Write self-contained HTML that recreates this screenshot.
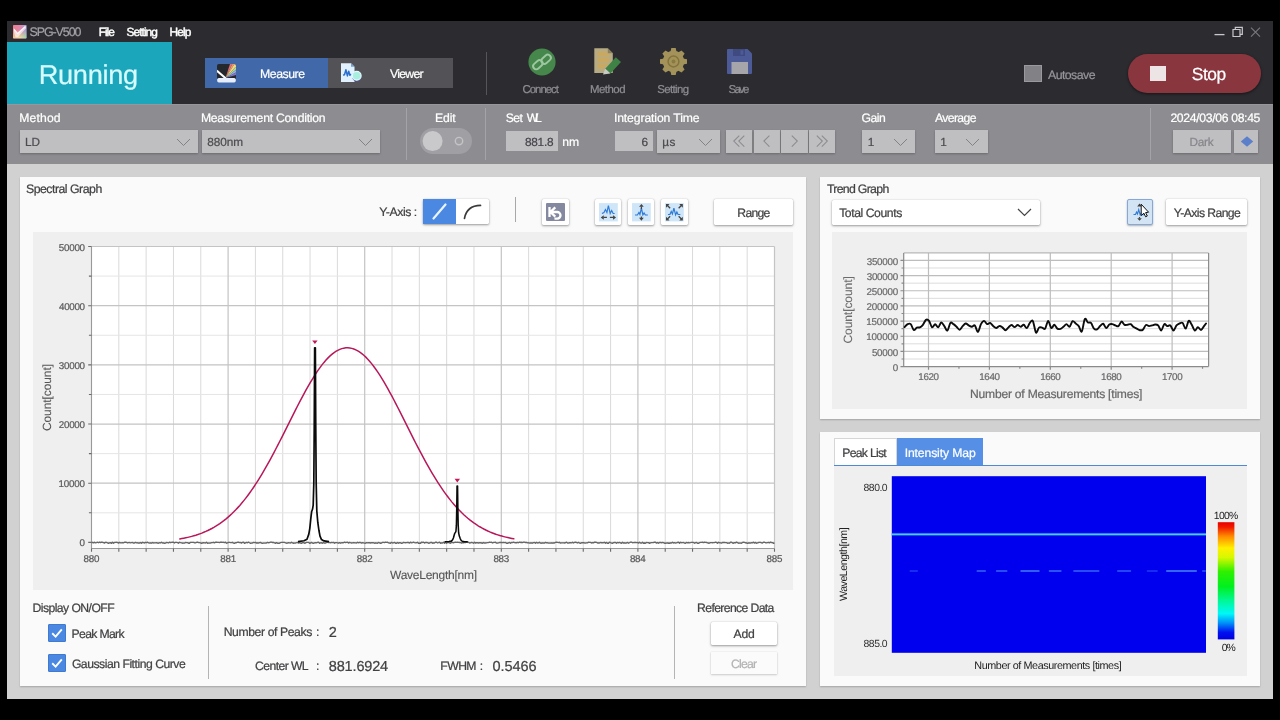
<!DOCTYPE html>
<html><head><meta charset="utf-8"><title>SPG-V500</title>
<style>
html,body{margin:0;padding:0;background:#000;}
body{width:1280px;height:720px;position:relative;overflow:hidden;font-family:"Liberation Sans",sans-serif;}
.b{position:absolute;box-sizing:border-box;}
.tx{font-family:"Liberation Sans",sans-serif;text-rendering:geometricPrecision;will-change:transform;pointer-events:none;}
.tx text{white-space:pre;}
.v{transform:translate(-50%,-50%) rotate(-90deg);transform-origin:50% 50%;}
.btn{box-shadow:0 1px 2.5px rgba(0,0,0,.38),0 0 1px rgba(0,0,0,.25);border-radius:1.5px;}
svg{overflow:visible}
</style></head><body>
<div class="b " style="left:7.00px;top:21.00px;width:1266.00px;height:678.00px;background:#d1d1d1;"></div>
<div class="b " style="left:7.00px;top:21.00px;width:1266.00px;height:83.30px;background:#2b2b30;"></div>
<svg class="b" style="left:12.9px;top:24.5px" width="13.6" height="13.6" viewBox="0 0 14 14"><defs><linearGradient id="ig1" x1="0" y1="0" x2="1" y2="0"><stop offset="0" stop-color="#e8657a"/><stop offset=".55" stop-color="#d870a0"/><stop offset="1" stop-color="#8f8fd4"/></linearGradient><linearGradient id="ig2" x1="0" y1="0" x2="1" y2="0"><stop offset="0" stop-color="#f6c27a"/><stop offset=".5" stop-color="#e8e090"/><stop offset="1" stop-color="#86d88a"/></linearGradient><linearGradient id="ig3" x1="0" y1="0" x2="0" y2="1"><stop offset="0" stop-color="#fff" stop-opacity="0"/><stop offset=".35" stop-color="#fff" stop-opacity="0"/><stop offset="1" stop-color="#fff" stop-opacity="1"/></linearGradient><mask id="im"><rect width="14" height="14" fill="url(#ig3)"/></mask></defs><rect width="14" height="14" rx=".8" fill="url(#ig1)"/><rect width="14" height="14" rx=".8" fill="url(#ig2)" mask="url(#im)"/><rect width="14" height="14" rx=".8" fill="#fff" opacity=".16"/><path d="M0.8 3.2 L4.6 8.2 L13.4 0.8 L13.4 3.4 L5 12.6 L2.6 12.6 L0.8 7z" fill="#fff" opacity=".62"/><path d="M1.2 4.4 L4.7 8.8 L12.6 1.6" stroke="#fff" stroke-width="1.3" fill="none" opacity=".8"/></svg>
<svg class="b" style="left:1210px;top:24px" width="56" height="16" viewBox="0 0 56 16"><path d="M4.5 10.6 H14.5" stroke="#c8c8cc" stroke-width="1.3" fill="none"/><path d="M23 5.5 h7 v7 h-7z M25.3 5.5 v-2.2 h7 v7 h-2.3" stroke="#c8c8cc" stroke-width="1.2" fill="none"/><path d="M41 3.7 L50 12.7 M50 3.7 L41 12.7" stroke="#77777c" stroke-width="1.2" fill="none"/></svg>
<div class="b " style="left:7.00px;top:41.70px;width:165.00px;height:62.60px;background:#1ba6bb;"></div>
<div class="b " style="left:205.00px;top:58.00px;width:123.40px;height:29.80px;background:#4168a8;"></div>
<div class="b " style="left:328.40px;top:58.00px;width:124.60px;height:29.80px;background:#535357;"></div>
<svg class="b" style="left:217px;top:64px" width="19" height="18.5" viewBox="0 0 19 18.5"><defs><clipPath id="mc"><rect x="0" y="0" width="19" height="16" rx="1.8"/></clipPath></defs><g clip-path="url(#mc)"><rect width="19" height="16" fill="#25292d"/><path d="M8.5 13.9 L13 0 L15.3 0z" fill="#de6e78"/><path d="M8.5 13.9 L15.3 0 L17.5 0z" fill="#f09a70"/><path d="M8.5 13.9 L17.5 0 L19 0 L19 2.6z" fill="#f5d784"/><path d="M8.5 13.9 L19 2.6 L19 5.8z" fill="#b4dc8c"/><path d="M8.5 13.9 L19 5.8 L19 8.6z" fill="#8fb0e8"/><path d="M8.5 13.9 L19 8.6 L19 11z" fill="#8674c4"/><path d="M-0.3 6.6 L8.6 14.2" stroke="#fff" stroke-width="2"/></g><rect x="0.2" y="14" width="18.6" height="4.4" rx="1.6" fill="#e6edfd"/></svg>
<svg class="b" style="left:340.5px;top:63px" width="21" height="20" viewBox="0 0 21 20"><path d="M0 0.3 h10 l3.5 3.5 v15.2 h-13.5z" fill="#e2f1fe"/><path d="M10 0.3 l3.5 3.5 h-3.5z" fill="#6fa2cf"/><path d="M2.2 12.3 l1.4 -0.8 l1.3 -4.8 l1.5 6.2 l1.3 -4.6 l1.2 4 l1 -1.2" stroke="#2b6fd0" stroke-width="1.5" fill="none" stroke-linejoin="round"/><circle cx="15.7" cy="13.6" r="4.7" fill="#5a4fae"/><circle cx="15.7" cy="12.8" r="4.4" fill="#a9efe0" stroke="#e3f9ff" stroke-width="1.2"/></svg>
<div class="b " style="left:486.20px;top:52.00px;width:1.10px;height:42.50px;background:#55555a;"></div>
<svg class="b" style="left:527.5px;top:47.5px" width="28" height="28" viewBox="0 0 28 28"><circle cx="14" cy="14" r="13.6" fill="#46874b"/><g fill="none" stroke="#9cc7a0" stroke-width="1.9" stroke-linecap="round"><rect x="4.6" y="13.6" width="10.6" height="6.2" rx="3.1" transform="rotate(-42 9.9 16.7)"/><rect x="12.8" y="8.2" width="10.6" height="6.2" rx="3.1" transform="rotate(-42 18.1 11.3)"/></g></svg>
<svg class="b" style="left:594px;top:48px" width="27" height="27" viewBox="0 0 27 27"><path d="M0.3 0.3 h13.5 l5 5 v19.7 h-18.5z" fill="#b7ab84"/><path d="M13.8 0.3 l5 5 h-5z" fill="#8a7f58"/><g stroke="#d3a84c" stroke-width="1.5"><path d="M3.6 4.6 h9.4 M3.6 7.6 h11.6 M3.6 10.6 h11.6 M3.6 13.6 h11.6 M3.6 16.6 h10 M3.6 19.6 h7"/></g><path d="M11.2 20.8 L21.8 9.2 L27 14 L16.4 25.6z" fill="#3f8245"/><path d="M11.2 20.8 L16.4 25.6 L9 26.6z" fill="#c9c9c4"/></svg>
<svg class="b" style="left:660px;top:47.7px" width="27" height="27" viewBox="-13.5 -13.5 27 27"><g fill="#a3935a"><path d="M-3.1 -9.5 L-2.2 -13.5 L2.2 -13.5 L3.1 -9.5z" transform="rotate(0)"/><path d="M-3.1 -9.5 L-2.2 -13.5 L2.2 -13.5 L3.1 -9.5z" transform="rotate(45)"/><path d="M-3.1 -9.5 L-2.2 -13.5 L2.2 -13.5 L3.1 -9.5z" transform="rotate(90)"/><path d="M-3.1 -9.5 L-2.2 -13.5 L2.2 -13.5 L3.1 -9.5z" transform="rotate(135)"/><path d="M-3.1 -9.5 L-2.2 -13.5 L2.2 -13.5 L3.1 -9.5z" transform="rotate(180)"/><path d="M-3.1 -9.5 L-2.2 -13.5 L2.2 -13.5 L3.1 -9.5z" transform="rotate(225)"/><path d="M-3.1 -9.5 L-2.2 -13.5 L2.2 -13.5 L3.1 -9.5z" transform="rotate(270)"/><path d="M-3.1 -9.5 L-2.2 -13.5 L2.2 -13.5 L3.1 -9.5z" transform="rotate(315)"/><circle r="10.7"/></g><circle r="5.4" fill="none" stroke="#83733c" stroke-width="1.5"/><circle r="1.9" fill="#8a7940"/></svg>
<svg class="b" style="left:727px;top:49px" width="25" height="25" viewBox="0 0 25 25"><path d="M0 1 a1 1 0 0 1 1 -1 h19.5 l4.5 4.5 v19.5 a1 1 0 0 1 -1 1 h-23 a1 1 0 0 1 -1 -1z" fill="#4d5a98"/><rect x="6" y="0" width="12" height="7" fill="#3e4a80"/><rect x="13.5" y="1.2" width="2.8" height="4.6" fill="#4d5a98"/><rect x="4.5" y="13" width="16.5" height="12" fill="#a6a6aa"/></svg>
<div class="b " style="left:1024.00px;top:64.50px;width:17.80px;height:17.50px;background:#818186;border:1.3px solid #99999e;"></div>
<div class="b " style="left:1128.00px;top:53.70px;width:132.50px;height:39.30px;background:#89363f;border-radius:20px;box-shadow:0 1px 3px rgba(0,0,0,.5);"></div>
<div class="b " style="left:1150.00px;top:66.00px;width:15.50px;height:15.00px;background:#ede4e6;"></div>
<div class="b " style="left:7.00px;top:104.10px;width:1266.00px;height:59.50px;background:#8d8d91;"></div>
<div class="b " style="left:7.00px;top:104.10px;width:1266.00px;height:1.10px;background:#97979b;"></div>
<div class="b " style="left:7.00px;top:41.70px;width:165.00px;height:62.60px;background:#1ba6bb;"></div>
<div class="b " style="left:20.00px;top:129.60px;width:178.00px;height:23.00px;background:#bfbfc2;box-shadow:0 1px 2px rgba(0,0,0,.25);"></div>
<svg class="b" style="left:176.20px;top:137.85px" width="15.0" height="8.5" viewBox="0 0 15.0 8.5"><path d="M1 1 L7.50 7.50 L14.00 1" fill="none" stroke="#828286" stroke-width="1.00"/></svg>
<div class="b " style="left:201.60px;top:129.60px;width:178.00px;height:23.00px;background:#bfbfc2;box-shadow:0 1px 2px rgba(0,0,0,.25);"></div>
<svg class="b" style="left:358.00px;top:137.85px" width="15.0" height="8.5" viewBox="0 0 15.0 8.5"><path d="M1 1 L7.50 7.50 L14.00 1" fill="none" stroke="#828286" stroke-width="1.00"/></svg>
<div class="b " style="left:405.60px;top:108.00px;width:1.00px;height:51.60px;background:#a4a4a8;"></div>
<div class="b " style="left:420.00px;top:128.30px;width:52.00px;height:25.50px;background:#a0a0a4;border-radius:13px;"></div>
<svg class="b" style="left:420px;top:128px" width="52" height="26" viewBox="0 0 52 26"><circle cx="12.6" cy="13.1" r="10" fill="#c9c9cb"/><circle cx="39" cy="13.1" r="3.7" fill="none" stroke="#c4c4c6" stroke-width="1.4"/></svg>
<div class="b " style="left:485.20px;top:108.00px;width:1.00px;height:51.60px;background:#a4a4a8;"></div>
<div class="b " style="left:506.00px;top:131.00px;width:52.00px;height:20.20px;background:#bfbfc2;"></div>
<div class="b " style="left:615.00px;top:131.00px;width:37.60px;height:20.20px;background:#bfbfc2;"></div>
<div class="b " style="left:657.00px;top:129.60px;width:62.60px;height:23.00px;background:#bfbfc2;box-shadow:0 1px 2px rgba(0,0,0,.25);"></div>
<svg class="b" style="left:697.50px;top:137.85px" width="15.0" height="8.5" viewBox="0 0 15.0 8.5"><path d="M1 1 L7.50 7.50 L14.00 1" fill="none" stroke="#828286" stroke-width="1.00"/></svg>
<div class="b " style="left:725.70px;top:129.60px;width:26.30px;height:23.00px;background:#bfbfc2;box-shadow:0 1px 2px rgba(0,0,0,.25);"></div>
<svg class="b" style="left:0;top:0" width="1" height="1"><path d="M739.3 135.6 l-5.5 5.5 l5.5 5.5 M744.3 135.6 l-5.5 5.5 l5.5 5.5" fill="none" stroke="#8c8c90" stroke-width="1.1"/></svg>
<div class="b " style="left:753.60px;top:129.60px;width:26.30px;height:23.00px;background:#bfbfc2;box-shadow:0 1px 2px rgba(0,0,0,.25);"></div>
<svg class="b" style="left:0;top:0" width="1" height="1"><path d="M769.4 135.6 l-5.5 5.5 l5.5 5.5" fill="none" stroke="#8c8c90" stroke-width="1.1"/></svg>
<div class="b " style="left:781.40px;top:129.60px;width:26.30px;height:23.00px;background:#bfbfc2;box-shadow:0 1px 2px rgba(0,0,0,.25);"></div>
<svg class="b" style="left:0;top:0" width="1" height="1"><path d="M791.8 135.6 l5.5 5.5 l-5.5 5.5" fill="none" stroke="#8c8c90" stroke-width="1.1"/></svg>
<div class="b " style="left:809.20px;top:129.60px;width:26.30px;height:23.00px;background:#bfbfc2;box-shadow:0 1px 2px rgba(0,0,0,.25);"></div>
<svg class="b" style="left:0;top:0" width="1" height="1"><path d="M816.8 135.6 l5.5 5.5 l-5.5 5.5 M821.8 135.6 l5.5 5.5 l-5.5 5.5" fill="none" stroke="#8c8c90" stroke-width="1.1"/></svg>
<div class="b " style="left:862.00px;top:129.60px;width:53.00px;height:23.00px;background:#bfbfc2;box-shadow:0 1px 2px rgba(0,0,0,.25);"></div>
<svg class="b" style="left:892.80px;top:137.85px" width="15.0" height="8.5" viewBox="0 0 15.0 8.5"><path d="M1 1 L7.50 7.50 L14.00 1" fill="none" stroke="#828286" stroke-width="1.00"/></svg>
<div class="b " style="left:935.00px;top:129.60px;width:52.60px;height:23.00px;background:#bfbfc2;box-shadow:0 1px 2px rgba(0,0,0,.25);"></div>
<svg class="b" style="left:965.20px;top:137.85px" width="15.0" height="8.5" viewBox="0 0 15.0 8.5"><path d="M1 1 L7.50 7.50 L14.00 1" fill="none" stroke="#828286" stroke-width="1.00"/></svg>
<div class="b " style="left:1150.00px;top:108.00px;width:1.00px;height:51.60px;background:#a4a4a8;"></div>
<div class="b " style="left:1173.00px;top:129.60px;width:57.80px;height:23.00px;background:#bfbfc2;box-shadow:0 1px 2px rgba(0,0,0,.25);"></div>
<div class="b " style="left:1234.20px;top:129.60px;width:23.40px;height:23.00px;background:#bfbfc2;box-shadow:0 1px 2px rgba(0,0,0,.25);"></div>
<svg class="b" style="left:1240px;top:135.5px" width="14" height="11" viewBox="0 0 14 11"><path d="M7 0.3 L13.2 5.5 L7 10.7 L0.8 5.5z" fill="#5b80c9"/></svg>
<div class="b " style="left:20.00px;top:177.00px;width:786.40px;height:508.80px;background:#fafafa;box-shadow:0 1px 1.5px rgba(0,0,0,.22);"></div>
<div class="b btn" style="left:423.00px;top:198.70px;width:66.00px;height:25.10px;background:#ffffff;"></div>
<div class="b " style="left:423.00px;top:198.70px;width:33.00px;height:25.10px;background:#4a88e2;"></div>
<svg class="b" style="left:423px;top:198.7px" width="66" height="25" viewBox="0 0 66 25"><path d="M10.5 19.5 L22.5 5.5" stroke="#e8f4ff" stroke-width="2.2" stroke-linecap="round"/><path d="M41.5 19.3 C43 11 48 6.6 57.5 6.4" stroke="#3a3a3c" stroke-width="1.7" fill="none" stroke-linecap="round"/></svg>
<div class="b " style="left:515.00px;top:197.00px;width:1.00px;height:25.40px;background:#a8a8a8;"></div>
<div class="b btn" style="left:542.20px;top:199.30px;width:26.80px;height:25.70px;background:#ffffff;"></div>
<svg class="b" style="left:546.2px;top:203px" width="19" height="18" viewBox="0 0 19 18"><rect width="19" height="18" rx="1" fill="#8589a0"/><path d="M3.5 4 v10 M4.3 9 l5 -4.6 M4.3 9 l5 4.6 M5 9 h6.2 a3.3 3.3 0 0 1 0 6.6 h-2.7" stroke="#fff" stroke-width="2.3" fill="none"/></svg>
<div class="b btn" style="left:594.70px;top:199.30px;width:26.80px;height:25.70px;background:#ffffff;"></div>
<svg class="b" style="left:598.7px;top:203px" width="18.8" height="18.5" viewBox="0 0 19 18.5"><rect width="19" height="18.5" fill="#cfe6f8"/><path d="M3 10.5 l2 -1 l1.5 -3 l1.5 3 l1.5 -7 l1.8 8 l1.5 -3 l1.5 3 h1.5" stroke="#2f7bd6" stroke-width="1.2" fill="none"/><path d="M4.5 14.5 h3.5 M11 14.5 h3.5" stroke="#444" stroke-width="1.3"/><path d="M1.8 14.5 l3 -2.3 v4.6z M17.2 14.5 l-3 -2.3 v4.6z" fill="#444"/></svg>
<div class="b btn" style="left:627.70px;top:199.30px;width:26.80px;height:25.70px;background:#ffffff;"></div>
<svg class="b" style="left:631.7px;top:203px" width="18.8" height="18.5" viewBox="0 0 19 18.5"><rect width="19" height="18.5" fill="#cfe6f8"/><path d="M3 12 h2.5 l1.5 -2.5 l1 2 l1.5 -6.5 l1.5 7 l1.2 -2 l1.3 2 h2.5" stroke="#2f7bd6" stroke-width="1.2" fill="none"/><path d="M9.5 3.5 v2.5 M9.5 13.5 v2" stroke="#444" stroke-width="1.3"/><path d="M9.5 0.8 l2.4 3 h-4.8z M9.5 17.8 l2.4 -3 h-4.8z" fill="#444"/></svg>
<div class="b btn" style="left:661.00px;top:199.30px;width:26.80px;height:25.70px;background:#ffffff;"></div>
<svg class="b" style="left:665.0px;top:203px" width="18.8" height="18.5" viewBox="0 0 19 18.5"><rect width="19" height="18.5" fill="#cfe6f8"/><path d="M3 11.5 h2 l1.3 -3 l1.2 2.5 l1.5 -6 l1.7 7 l1.3 -3 l1.2 2.5 h2.3" stroke="#2f7bd6" stroke-width="1.2" fill="none"/><g stroke="#444" stroke-width="1.3"><path d="M2 2 l3.2 3.2 M17 2 l-3.2 3.2 M2 16.5 l3.2 -3.2 M17 16.5 l-3.2 -3.2"/></g><path d="M1 1 h3.6 l-3.6 3.6z M18 1 h-3.6 l3.6 3.6z M1 17.5 h3.6 l-3.6 -3.6z M18 17.5 h-3.6 l3.6 -3.6z" fill="#444"/></svg>
<div class="b btn" style="left:713.80px;top:199.30px;width:79.30px;height:25.90px;background:#ffffff;"></div>
<div class="b " style="left:33.10px;top:232.20px;width:759.90px;height:357.40px;background:#efefef;"></div>
<svg class="b" style="left:0;top:0" width="1280" height="720" viewBox="0 0 1280 720"><rect x="91.50" y="246.50" width="683.00" height="302.00" fill="#fff"/><path d="M118.82 246.50 V548.50 M146.14 246.50 V548.50 M173.46 246.50 V548.50 M200.78 246.50 V548.50 M255.42 246.50 V548.50 M282.74 246.50 V548.50 M310.06 246.50 V548.50 M337.38 246.50 V548.50 M392.02 246.50 V548.50 M419.34 246.50 V548.50 M446.66 246.50 V548.50 M473.98 246.50 V548.50 M528.62 246.50 V548.50 M555.94 246.50 V548.50 M583.26 246.50 V548.50 M610.58 246.50 V548.50 M665.22 246.50 V548.50 M692.54 246.50 V548.50 M719.86 246.50 V548.50 M747.18 246.50 V548.50 " stroke="#dadada" stroke-width="1" fill="none"/><path d="M91.50 512.81 H774.50 M91.50 453.63 H774.50 M91.50 394.45 H774.50 M91.50 335.27 H774.50 M91.50 276.09 H774.50 " stroke="#e5e5e5" stroke-width="1" fill="none"/><path d="M228.10 246.50 V548.50 M364.70 246.50 V548.50 M501.30 246.50 V548.50 M637.90 246.50 V548.50 M774.50 246.50 V548.50 M91.50 542.40 H774.50 M91.50 483.22 H774.50 M91.50 424.04 H774.50 M91.50 364.86 H774.50 M91.50 305.68 H774.50 M91.50 246.50 H774.50 " stroke="#c4c4c4" stroke-width="1.2" fill="none"/><path d="M91.50 246.50 V548.50 H774.50 " stroke="#999999" stroke-width="1.1" fill="none"/><path d="M91.50 548.50 v3.2 M118.82 548.50 v3.2 M146.14 548.50 v3.2 M173.46 548.50 v3.2 M200.78 548.50 v3.2 M228.10 548.50 v3.2 M255.42 548.50 v3.2 M282.74 548.50 v3.2 M310.06 548.50 v3.2 M337.38 548.50 v3.2 M364.70 548.50 v3.2 M392.02 548.50 v3.2 M419.34 548.50 v3.2 M446.66 548.50 v3.2 M473.98 548.50 v3.2 M501.30 548.50 v3.2 M528.62 548.50 v3.2 M555.94 548.50 v3.2 M583.26 548.50 v3.2 M610.58 548.50 v3.2 M637.90 548.50 v3.2 M665.22 548.50 v3.2 M692.54 548.50 v3.2 M719.86 548.50 v3.2 M747.18 548.50 v3.2 M774.50 548.50 v3.2 M91.50 542.40 h-3.3 M91.50 512.81 h-2.6 M91.50 483.22 h-3.3 M91.50 453.63 h-2.6 M91.50 424.04 h-3.3 M91.50 394.45 h-2.6 M91.50 364.86 h-3.3 M91.50 335.27 h-2.6 M91.50 305.68 h-3.3 M91.50 276.09 h-2.6 M91.50 246.50 h-3.3 " stroke="#6a6a6a" stroke-width="1.1" fill="none"/><polyline points="91.5,542.54 92.5,542.33 93.5,542.93 94.5,542.24 95.5,542.79 96.5,542.59 97.5,542.22 98.5,542.76 99.5,542.19 100.5,542.67 101.5,542.23 102.5,542.26 103.5,542.66 104.5,543.14 105.5,542.30 106.5,542.42 107.5,542.90 108.5,543.29 109.5,542.84 110.5,542.63 111.5,543.32 112.5,542.21 113.5,543.18 114.5,542.50 115.5,542.32 116.5,542.29 117.5,542.52 118.5,543.13 119.5,542.37 120.5,542.85 121.5,542.92 122.5,542.60 123.5,542.81 124.5,542.23 125.5,542.22 126.5,542.40 127.5,542.97 128.5,542.66 129.5,542.53 130.5,542.85 131.5,542.69 132.5,542.51 133.5,543.10 134.5,542.99 135.5,542.44 136.5,542.84 137.5,542.78 138.5,543.20 139.5,543.03 140.5,542.50 141.5,543.33 142.5,542.29 143.5,542.65 144.5,543.06 145.5,542.33 146.5,542.74 147.5,542.20 148.5,542.95 149.5,543.07 150.5,542.84 151.5,543.20 152.5,542.53 153.5,542.98 154.5,542.86 155.5,542.85 156.5,542.70 157.5,543.16 158.5,543.28 159.5,542.72 160.5,542.95 161.5,542.22 162.5,542.99 163.5,542.93 164.5,543.34 165.5,543.14 166.5,542.49 167.5,542.61 168.5,542.95 169.5,542.18 170.5,542.70 171.5,542.35 172.5,542.29 173.5,542.22 174.5,543.07 175.5,542.31 176.5,542.45 177.5,542.62 178.5,543.20 179.5,542.25 180.5,542.69 181.5,542.81 182.5,543.21 183.5,543.13 184.5,543.19 185.5,542.48 186.5,542.65 187.5,542.58 188.5,543.21 189.5,543.30 190.5,542.33 191.5,542.36 192.5,542.43 193.5,542.43 194.5,542.73 195.5,542.86 196.5,542.47 197.5,542.15 198.5,542.65 199.5,542.59 200.5,542.83 201.5,543.29 202.5,542.98 203.5,542.77 204.5,542.89 205.5,542.96 206.5,542.21 207.5,543.23 208.5,543.09 209.5,543.20 210.5,543.11 211.5,542.62 212.5,542.63 213.5,542.27 214.5,542.91 215.5,542.22 216.5,542.23 217.5,542.40 218.5,542.34 219.5,542.56 220.5,542.21 221.5,542.15 222.5,542.33 223.5,542.27 224.5,542.59 225.5,542.18 226.5,543.20 227.5,542.89 228.5,542.33 229.5,542.45 230.5,542.57 231.5,542.59 232.5,542.30 233.5,543.17 234.5,543.34 235.5,542.71 236.5,542.73 237.5,542.25 238.5,542.27 239.5,542.56 240.5,542.47 241.5,543.14 242.5,542.34 243.5,542.18 244.5,543.29 245.5,542.78 246.5,542.33 247.5,542.80 248.5,542.18 249.5,542.78 250.5,543.32 251.5,543.19 252.5,542.99 253.5,542.46 254.5,542.59 255.5,542.35 256.5,543.08 257.5,542.79 258.5,543.08 259.5,542.55 260.5,542.42 261.5,543.12 262.5,543.33 263.5,543.17 264.5,543.12 265.5,543.13 266.5,543.04 267.5,542.42 268.5,542.77 269.5,542.58 270.5,542.18 271.5,542.18 272.5,542.49 273.5,542.46 274.5,542.98 275.5,543.30 276.5,542.69 277.5,543.27 278.5,543.34 279.5,543.30 280.5,542.59 281.5,542.41 282.5,542.42 283.5,542.39 284.5,542.40 285.5,542.90 286.5,543.23 287.5,543.16 288.5,542.73 289.5,542.93 290.5,543.11 291.5,542.25 292.5,542.94 293.5,543.24 294.5,543.09 295.5,543.05 296.5,542.72 297.5,542.36 298.5,543.10 299.5,542.55 300.5,543.11 301.5,543.32 302.5,542.63 303.5,542.63 304.5,543.29 305.5,543.02 306.5,542.35 307.5,542.30 308.5,542.33 309.5,543.24 310.5,543.12 311.5,542.33 312.5,543.14 313.5,543.33 314.5,542.94 315.5,542.57 316.5,542.81 317.5,542.31 318.5,542.17 319.5,543.32 320.5,542.93 321.5,542.78 322.5,543.27 323.5,542.67 324.5,543.20 325.5,543.14 326.5,542.40 327.5,542.45 328.5,542.50 329.5,542.44 330.5,542.85 331.5,542.46 332.5,542.65 333.5,542.31 334.5,543.24 335.5,542.57 336.5,542.70 337.5,542.85 338.5,543.24 339.5,542.65 340.5,543.25 341.5,542.75 342.5,542.79 343.5,542.78 344.5,542.17 345.5,542.68 346.5,542.37 347.5,542.15 348.5,543.11 349.5,542.36 350.5,542.72 351.5,543.02 352.5,542.82 353.5,542.54 354.5,542.77 355.5,542.82 356.5,543.09 357.5,542.28 358.5,542.82 359.5,542.45 360.5,542.48 361.5,543.08 362.5,542.76 363.5,542.82 364.5,543.06 365.5,543.24 366.5,542.68 367.5,542.89 368.5,542.76 369.5,542.76 370.5,542.98 371.5,542.69 372.5,542.79 373.5,542.72 374.5,543.28 375.5,542.99 376.5,543.20 377.5,543.28 378.5,542.46 379.5,542.82 380.5,543.28 381.5,543.16 382.5,542.31 383.5,542.30 384.5,542.68 385.5,542.24 386.5,542.44 387.5,542.24 388.5,542.95 389.5,543.09 390.5,543.23 391.5,542.34 392.5,543.01 393.5,542.94 394.5,542.32 395.5,543.21 396.5,543.31 397.5,542.41 398.5,543.29 399.5,542.63 400.5,542.73 401.5,543.34 402.5,543.15 403.5,542.34 404.5,542.67 405.5,542.77 406.5,542.56 407.5,542.38 408.5,542.53 409.5,543.02 410.5,542.17 411.5,542.81 412.5,542.68 413.5,542.17 414.5,542.55 415.5,542.90 416.5,542.76 417.5,542.23 418.5,543.33 419.5,543.10 420.5,543.32 421.5,542.28 422.5,542.47 423.5,542.20 424.5,543.08 425.5,542.47 426.5,542.31 427.5,542.66 428.5,543.24 429.5,543.13 430.5,542.46 431.5,542.33 432.5,543.25 433.5,542.83 434.5,542.99 435.5,542.26 436.5,542.22 437.5,542.98 438.5,542.66 439.5,542.24 440.5,543.28 441.5,542.91 442.5,543.11 443.5,542.25 444.5,543.18 445.5,542.23 446.5,543.19 447.5,542.69 448.5,542.56 449.5,542.81 450.5,543.26 451.5,542.47 452.5,542.31 453.5,542.78 454.5,542.44 455.5,542.28 456.5,542.34 457.5,542.21 458.5,542.39 459.5,542.52 460.5,542.52 461.5,543.06 462.5,542.50 463.5,542.75 464.5,542.36 465.5,542.57 466.5,542.17 467.5,542.45 468.5,542.17 469.5,543.03 470.5,542.81 471.5,542.38 472.5,542.72 473.5,543.27 474.5,542.28 475.5,543.13 476.5,542.67 477.5,542.74 478.5,543.15 479.5,542.62 480.5,542.76 481.5,542.98 482.5,543.33 483.5,542.56 484.5,543.15 485.5,543.00 486.5,542.91 487.5,542.64 488.5,542.57 489.5,542.22 490.5,542.31 491.5,542.23 492.5,543.04 493.5,542.46 494.5,542.35 495.5,542.25 496.5,543.16 497.5,543.19 498.5,542.95 499.5,542.49 500.5,542.44 501.5,542.50 502.5,542.70 503.5,542.34 504.5,542.68 505.5,542.47 506.5,543.30 507.5,543.32 508.5,542.81 509.5,542.44 510.5,543.31 511.5,542.52 512.5,542.58 513.5,542.15 514.5,542.61 515.5,542.72 516.5,542.75 517.5,542.39 518.5,542.76 519.5,542.16 520.5,542.47 521.5,542.26 522.5,542.63 523.5,542.20 524.5,542.18 525.5,542.52 526.5,542.43 527.5,542.85 528.5,542.79 529.5,543.05 530.5,542.94 531.5,543.01 532.5,543.20 533.5,542.62 534.5,542.54 535.5,543.33 536.5,542.33 537.5,543.02 538.5,542.92 539.5,542.20 540.5,543.15 541.5,543.22 542.5,542.90 543.5,543.03 544.5,543.12 545.5,542.32 546.5,542.78 547.5,542.76 548.5,543.15 549.5,543.12 550.5,543.14 551.5,542.85 552.5,543.22 553.5,542.97 554.5,542.98 555.5,542.43 556.5,542.19 557.5,542.31 558.5,542.58 559.5,542.28 560.5,543.15 561.5,542.82 562.5,542.90 563.5,542.90 564.5,542.97 565.5,542.74 566.5,542.15 567.5,543.11 568.5,543.05 569.5,542.75 570.5,542.79 571.5,542.94 572.5,542.23 573.5,543.03 574.5,542.45 575.5,542.24 576.5,542.47 577.5,543.03 578.5,542.40 579.5,543.04 580.5,543.32 581.5,542.74 582.5,542.61 583.5,542.72 584.5,542.97 585.5,543.07 586.5,542.89 587.5,542.92 588.5,542.24 589.5,542.33 590.5,542.45 591.5,543.04 592.5,542.52 593.5,542.83 594.5,542.16 595.5,542.22 596.5,542.47 597.5,542.96 598.5,542.98 599.5,542.96 600.5,542.50 601.5,542.77 602.5,542.71 603.5,542.71 604.5,542.29 605.5,543.22 606.5,542.39 607.5,543.32 608.5,543.27 609.5,542.17 610.5,542.70 611.5,543.13 612.5,543.31 613.5,542.69 614.5,542.47 615.5,542.40 616.5,543.28 617.5,542.40 618.5,542.85 619.5,542.32 620.5,542.78 621.5,543.29 622.5,542.31 623.5,543.13 624.5,542.76 625.5,543.21 626.5,542.99 627.5,542.43 628.5,543.23 629.5,542.73 630.5,542.18 631.5,542.15 632.5,542.74 633.5,542.69 634.5,542.51 635.5,542.32 636.5,542.56 637.5,542.53 638.5,543.16 639.5,542.15 640.5,543.05 641.5,543.16 642.5,542.29 643.5,543.26 644.5,543.01 645.5,543.23 646.5,542.50 647.5,542.60 648.5,542.62 649.5,543.35 650.5,542.86 651.5,542.58 652.5,542.66 653.5,542.48 654.5,542.21 655.5,542.27 656.5,543.15 657.5,542.49 658.5,543.27 659.5,542.45 660.5,542.47 661.5,542.76 662.5,542.38 663.5,542.60 664.5,543.30 665.5,543.21 666.5,543.12 667.5,542.91 668.5,543.25 669.5,543.28 670.5,542.81 671.5,543.01 672.5,542.21 673.5,543.03 674.5,542.69 675.5,543.05 676.5,542.92 677.5,542.49 678.5,542.21 679.5,543.26 680.5,542.30 681.5,542.72 682.5,542.56 683.5,542.51 684.5,543.04 685.5,543.32 686.5,542.46 687.5,542.94 688.5,542.51 689.5,542.82 690.5,542.62 691.5,542.35 692.5,542.34 693.5,542.40 694.5,543.24 695.5,542.75 696.5,542.41 697.5,543.24 698.5,543.35 699.5,542.69 700.5,542.32 701.5,542.38 702.5,542.26 703.5,542.56 704.5,542.26 705.5,542.44 706.5,542.46 707.5,542.83 708.5,543.21 709.5,543.05 710.5,542.65 711.5,542.65 712.5,542.78 713.5,542.60 714.5,542.56 715.5,542.22 716.5,542.48 717.5,543.31 718.5,542.30 719.5,542.75 720.5,542.91 721.5,543.19 722.5,542.41 723.5,542.48 724.5,542.45 725.5,542.63 726.5,542.69 727.5,543.29 728.5,543.17 729.5,543.20 730.5,542.18 731.5,542.19 732.5,543.00 733.5,543.22 734.5,542.72 735.5,542.85 736.5,542.15 737.5,542.62 738.5,543.26 739.5,543.14 740.5,543.18 741.5,543.32 742.5,542.45 743.5,542.28 744.5,542.34 745.5,542.78 746.5,542.97 747.5,543.28 748.5,543.02 749.5,542.93 750.5,543.07 751.5,542.70 752.5,542.81 753.5,542.20 754.5,543.09 755.5,542.43 756.5,543.25 757.5,542.92 758.5,542.51 759.5,542.30 760.5,542.45 761.5,542.91 762.5,542.99 763.5,542.28 764.5,542.23 765.5,542.78 766.5,542.85 767.5,542.62 768.5,542.42 769.5,542.87 770.5,542.16 771.5,542.51 772.5,542.70 773.5,543.30 774.5,542.92" fill="none" stroke="#666666" stroke-width="1.35" stroke-linejoin="round"/><polyline points="179.8,538.94 181.8,538.59 183.8,538.22 185.8,537.81 187.8,537.36 189.8,536.88 191.8,536.36 193.8,535.80 195.8,535.20 197.8,534.55 199.8,533.85 201.8,533.10 203.8,532.29 205.8,531.43 207.8,530.51 209.8,529.52 211.8,528.47 213.8,527.36 215.8,526.17 217.8,524.90 219.8,523.56 221.8,522.14 223.8,520.64 225.8,519.05 227.8,517.38 229.8,515.61 231.8,513.76 233.8,511.81 235.8,509.77 237.8,507.63 239.8,505.40 241.8,503.06 243.8,500.63 245.8,498.09 247.8,495.46 249.8,492.73 251.8,489.89 253.8,486.96 255.8,483.94 257.8,480.82 259.8,477.61 261.8,474.30 263.8,470.92 265.8,467.45 267.8,463.90 269.8,460.28 271.8,456.59 273.8,452.83 275.8,449.02 277.8,445.16 279.8,441.26 281.8,437.32 283.8,433.35 285.8,429.37 287.8,425.37 289.8,421.37 291.8,417.38 293.8,413.40 295.8,409.45 297.8,405.53 299.8,401.67 301.8,397.86 303.8,394.11 305.8,390.45 307.8,386.87 309.8,383.39 311.8,380.02 313.8,376.77 315.8,373.65 317.8,370.67 319.8,367.83 321.8,365.15 323.8,362.64 325.8,360.30 327.8,358.14 329.8,356.17 331.8,354.40 333.8,352.83 335.8,351.46 337.8,350.31 339.8,349.37 341.8,348.64 343.8,348.14 345.8,347.86 347.8,347.81 349.8,347.97 351.8,348.37 353.8,348.98 355.8,349.81 357.8,350.86 359.8,352.12 361.8,353.59 363.8,355.26 365.8,357.14 367.8,359.20 369.8,361.45 371.8,363.88 373.8,366.47 375.8,369.23 377.8,372.14 379.8,375.19 381.8,378.38 383.8,381.69 385.8,385.12 387.8,388.65 389.8,392.27 391.8,395.98 393.8,399.75 395.8,403.59 397.8,407.49 399.8,411.42 401.8,415.38 403.8,419.37 405.8,423.37 407.8,427.37 409.8,431.36 411.8,435.34 413.8,439.29 415.8,443.22 417.8,447.10 419.8,450.94 421.8,454.72 423.8,458.44 425.8,462.10 427.8,465.68 429.8,469.19 431.8,472.62 433.8,475.97 435.8,479.22 437.8,482.39 439.8,485.46 441.8,488.44 443.8,491.32 445.8,494.10 447.8,496.79 449.8,499.37 451.8,501.86 453.8,504.24 455.8,506.53 457.8,508.71 459.8,510.80 461.8,512.80 463.8,514.70 465.8,516.51 467.8,518.23 469.8,519.86 471.8,521.40 473.8,522.86 475.8,524.24 477.8,525.54 479.8,526.77 481.8,527.92 483.8,529.01 485.8,530.03 487.8,530.98 489.8,531.87 491.8,532.70 493.8,533.48 495.8,534.21 497.8,534.88 499.8,535.51 501.8,536.09 503.8,536.63 505.8,537.13 507.8,537.59 509.8,538.02 511.8,538.41 513.8,538.77" fill="none" stroke="#b8175a" stroke-width="1.5" stroke-linecap="round"/><polyline points="298.00,541.71 304.00,540.74 307.00,539.18 308.80,534.14 309.80,528.31 310.80,518.61 311.60,511.81 312.50,509.29 313.20,505.02 313.80,483.67 314.25,425.44 314.65,347.80 315.35,347.80 315.75,425.44 316.20,483.67 316.80,510.84 317.80,522.49 318.90,530.25 320.00,536.08 321.50,539.57 324.00,540.93 329.00,541.71" fill="none" stroke="#0a0a0a" stroke-width="1.7" stroke-linejoin="round"/><polyline points="444.55,541.84 449.05,541.57 451.30,541.12 452.65,539.67 453.40,537.99 454.15,535.20 454.75,533.25 455.43,532.53 455.95,531.30 456.40,525.16 456.74,508.42 457.04,486.10 457.56,486.10 457.86,508.42 458.20,525.16 458.65,532.97 459.40,536.32 460.23,538.55 461.05,540.23 462.18,541.23 464.05,541.62 467.80,541.84" fill="none" stroke="#0a0a0a" stroke-width="1.55" stroke-linejoin="round"/><path d="M312.20 340.50 h5.4 l-2.7 3.6z" fill="#c2185b"/><path d="M454.60 478.80 h5.4 l-2.7 3.6z" fill="#c2185b"/></svg>
<div class="b " style="left:47.60px;top:624.30px;width:18.20px;height:18.20px;background:#4a88e2;border-radius:1px;border:1px solid #4079d0;"></div>
<svg class="b" style="left:47.6px;top:624.3px" width="18" height="18" viewBox="0 0 18 18"><path d="M4.2 9.3 L7.6 12.6 L13.8 5.4" stroke="#fff" stroke-width="1.9" fill="none"/></svg>
<div class="b " style="left:47.60px;top:653.90px;width:18.20px;height:18.20px;background:#4a88e2;border-radius:1px;border:1px solid #4079d0;"></div>
<svg class="b" style="left:47.6px;top:653.9px" width="18" height="18" viewBox="0 0 18 18"><path d="M4.2 9.3 L7.6 12.6 L13.8 5.4" stroke="#fff" stroke-width="1.9" fill="none"/></svg>
<div class="b " style="left:207.90px;top:606.00px;width:1.00px;height:73.40px;background:#b4b4b4;"></div>
<div class="b " style="left:673.60px;top:606.00px;width:1.00px;height:73.40px;background:#b4b4b4;"></div>
<div class="b btn" style="left:710.50px;top:622.00px;width:66.40px;height:22.50px;background:#ffffff;"></div>
<div class="b " style="left:710.50px;top:652.30px;width:66.40px;height:22.10px;background:#fbfbfb;box-shadow:0 1px 2px rgba(0,0,0,.18),0 0 1px rgba(0,0,0,.15);"></div>
<div class="b " style="left:819.50px;top:177.00px;width:440.80px;height:242.00px;background:#fafafa;box-shadow:0 1px 1.5px rgba(0,0,0,.22);"></div>
<div class="b btn" style="left:832.40px;top:199.50px;width:207.20px;height:25.60px;background:#ffffff;"></div>
<svg class="b" style="left:1016.80px;top:208.35px" width="15.0" height="8.5" viewBox="0 0 15.0 8.5"><path d="M1 1 L7.50 7.50 L14.00 1" fill="none" stroke="#444" stroke-width="1.20"/></svg>
<div class="b " style="left:1127.20px;top:199.30px;width:25.60px;height:25.60px;background:#d3e4f5;border:1.6px solid #86a8d8;border-radius:2px;box-shadow:0 1px 2px rgba(0,0,0,.3);"></div>
<svg class="b" style="left:1131px;top:202px" width="20" height="20" viewBox="0 0 20 20"><path d="M2.5 12.5 h2 l1 -2.5 l1 2 l1.2 -4.5 l1.5 5.5 l1 -2 l1 1.8 h2" stroke="#2f7bd6" stroke-width="1.1" fill="none"/><path d="M8.5 15 v1.6" stroke="#444" stroke-width="1.2"/><path d="M8.5 18.8 l2.3 -2.6 h-4.6z M8.5 1.6 l2.3 2.8 h-4.6z" fill="#444"/><path d="M10.2 2.2 L10.2 13.6 L12.9 11.2 L14.6 14.8 L16.3 14 L14.6 10.6 L17.6 10.2z" fill="#fff" stroke="#111" stroke-width="1" stroke-linejoin="round"/></svg>
<div class="b btn" style="left:1166.40px;top:199.30px;width:80.40px;height:25.70px;background:#ffffff;"></div>
<div class="b " style="left:832.30px;top:232.20px;width:414.70px;height:176.50px;background:#efefef;"></div>
<svg class="b" style="left:0;top:0" width="1280" height="720" viewBox="0 0 1280 720"><rect x="903.70" y="252.90" width="304.90" height="113.70" fill="#fff"/><path d="M903.70 359.01 H1208.60 M903.70 343.84 H1208.60 M903.70 328.67 H1208.60 M903.70 313.50 H1208.60 M903.70 298.33 H1208.60 M903.70 283.16 H1208.60 M903.70 267.99 H1208.60 " stroke="#dcdcdc" stroke-width="1" fill="none"/><path d="M903.70 351.43 H1208.60 M903.70 336.26 H1208.60 M903.70 321.09 H1208.60 M903.70 305.91 H1208.60 M903.70 290.74 H1208.60 M903.70 275.57 H1208.60 M903.70 260.40 H1208.60 M928.50 252.90 V366.60 M989.40 252.90 V366.60 M1050.30 252.90 V366.60 M1111.20 252.90 V366.60 M1172.10 252.90 V366.60 " stroke="#bdbdbd" stroke-width="1.2" fill="none"/><path d="M903.70 252.90 H1208.60 " stroke="#b8b8b8" stroke-width="1.3" fill="none"/><path d="M1208.60 252.90 V366.60 " stroke="#8c8c8c" stroke-width="1.2" fill="none"/><path d="M903.70 252.90 V366.60 H1208.60 M903.70 366.60 h-3.2 M903.70 359.01 h-2.2 M903.70 351.43 h-3.2 M903.70 343.84 h-2.2 M903.70 336.26 h-3.2 M903.70 328.67 h-2.2 M903.70 321.09 h-3.2 M903.70 313.50 h-2.2 M903.70 305.91 h-3.2 M903.70 298.33 h-2.2 M903.70 290.74 h-3.2 M903.70 283.16 h-2.2 M903.70 275.57 h-3.2 M903.70 267.99 h-2.2 M903.70 260.40 h-3.2 M928.50 366.60 v3.2 M958.95 366.60 v2.2 M989.40 366.60 v3.2 M1019.85 366.60 v2.2 M1050.30 366.60 v3.2 M1080.75 366.60 v2.2 M1111.20 366.60 v3.2 M1141.65 366.60 v2.2 M1172.10 366.60 v3.2 M1202.55 366.60 v2.2 " stroke="#8a8a8a" stroke-width="1.2" fill="none"/><path d="M904.60 327.11 C905.11 326.62 906.64 324.64 907.65 324.15 C908.67 323.65 909.69 323.18 910.71 324.15 C911.73 325.11 912.75 329.37 913.76 329.95 C914.78 330.53 915.80 328.06 916.82 327.63 C917.84 327.20 918.86 327.84 919.87 327.37 C920.89 326.90 921.91 326.04 922.93 324.79 C923.95 323.54 924.97 320.54 925.98 319.89 C927.00 319.25 928.02 319.68 929.04 320.92 C930.06 322.17 931.08 326.83 932.09 327.37 C933.11 327.91 934.13 324.15 935.15 324.15 C936.17 324.15 937.19 327.65 938.20 327.37 C939.22 327.09 940.24 322.69 941.26 322.47 C942.28 322.26 943.30 324.73 944.31 326.08 C945.33 327.43 946.35 331.13 947.37 330.59 C948.39 330.05 949.41 323.93 950.42 322.86 C951.44 321.78 952.46 323.50 953.48 324.15 C954.50 324.79 955.52 325.80 956.53 326.72 C957.55 327.65 958.57 329.80 959.59 329.69 C960.61 329.58 961.63 327.11 962.64 326.08 C963.66 325.05 964.68 323.61 965.70 323.50 C966.72 323.39 967.74 324.90 968.75 325.44 C969.77 325.97 970.79 326.72 971.81 326.72 C972.83 326.72 973.85 324.58 974.86 325.44 C975.88 326.29 976.90 332.10 977.92 331.88 C978.94 331.67 979.96 325.97 980.97 324.15 C981.99 322.32 983.01 320.92 984.03 320.92 C985.05 320.92 986.07 323.82 987.08 324.15 C988.10 324.47 989.12 322.54 990.14 322.86 C991.16 323.18 992.18 325.22 993.19 326.08 C994.21 326.94 995.23 328.01 996.25 328.01 C997.27 328.01 998.29 326.19 999.30 326.08 C1000.32 325.97 1001.34 326.68 1002.36 327.37 C1003.38 328.06 1004.40 330.20 1005.41 330.20 C1006.43 330.20 1007.45 328.23 1008.47 327.37 C1009.49 326.51 1010.51 325.09 1011.52 325.05 C1012.54 325.01 1013.56 327.11 1014.58 327.11 C1015.60 327.11 1016.62 325.11 1017.63 325.05 C1018.65 324.98 1019.67 326.77 1020.69 326.72 C1021.71 326.68 1022.73 324.58 1023.74 324.79 C1024.76 325.01 1025.78 328.34 1026.80 328.01 C1027.82 327.69 1028.84 324.00 1029.86 322.86 C1030.87 321.72 1031.89 319.57 1032.91 321.18 C1033.93 322.79 1034.95 331.45 1035.96 332.52 C1036.98 333.60 1038.00 328.44 1039.02 327.63 C1040.04 326.81 1041.06 327.45 1042.07 327.63 C1043.09 327.80 1044.11 329.77 1045.13 328.66 C1046.15 327.54 1047.17 321.03 1048.18 320.92 C1049.20 320.82 1050.22 327.37 1051.24 328.01 C1052.26 328.66 1053.28 324.68 1054.29 324.79 C1055.31 324.90 1056.33 327.97 1057.35 328.66 C1058.37 329.35 1059.39 329.24 1060.40 328.92 C1061.42 328.59 1062.44 327.52 1063.46 326.72 C1064.48 325.93 1065.50 324.15 1066.51 324.15 C1067.53 324.15 1068.55 327.22 1069.57 326.72 C1070.59 326.23 1071.61 321.72 1072.62 321.18 C1073.64 320.64 1074.66 322.69 1075.68 323.50 C1076.70 324.32 1077.72 324.75 1078.73 326.08 C1079.75 327.41 1080.77 332.68 1081.79 331.49 C1082.81 330.31 1083.83 320.49 1084.85 318.99 C1085.86 317.49 1086.88 321.83 1087.90 322.47 C1088.92 323.12 1089.94 321.83 1090.95 322.86 C1091.97 323.89 1092.99 327.58 1094.01 328.66 C1095.03 329.73 1096.05 329.73 1097.06 329.30 C1098.08 328.87 1099.10 327.00 1100.12 326.08 C1101.14 325.16 1102.16 323.44 1103.17 323.76 C1104.19 324.08 1105.21 327.88 1106.23 328.01 C1107.25 328.14 1108.27 325.18 1109.28 324.53 C1110.30 323.89 1111.32 324.00 1112.34 324.15 C1113.36 324.30 1114.38 325.11 1115.39 325.44 C1116.41 325.76 1117.43 326.72 1118.45 326.08 C1119.47 325.44 1120.49 321.78 1121.50 321.57 C1122.52 321.35 1123.54 324.25 1124.56 324.79 C1125.58 325.33 1126.60 324.90 1127.62 324.79 C1128.63 324.68 1129.65 323.76 1130.67 324.15 C1131.69 324.53 1132.71 326.36 1133.72 327.11 C1134.74 327.86 1135.76 328.14 1136.78 328.66 C1137.80 329.17 1138.82 330.03 1139.83 330.20 C1140.85 330.38 1141.87 330.55 1142.89 329.69 C1143.91 328.83 1144.93 325.65 1145.94 325.05 C1146.96 324.45 1147.98 326.02 1149.00 326.08 C1150.02 326.14 1151.04 325.69 1152.05 325.44 C1153.07 325.18 1154.09 324.53 1155.11 324.53 C1156.13 324.53 1157.15 324.43 1158.16 325.44 C1159.18 326.45 1160.20 330.81 1161.22 330.59 C1162.24 330.38 1163.26 324.90 1164.27 324.15 C1165.29 323.39 1166.31 325.87 1167.33 326.08 C1168.35 326.29 1169.37 324.68 1170.38 325.44 C1171.40 326.19 1172.42 330.59 1173.44 330.59 C1174.46 330.59 1175.48 326.62 1176.49 325.44 C1177.51 324.25 1178.53 323.93 1179.55 323.50 C1180.57 323.07 1181.59 322.00 1182.60 322.86 C1183.62 323.72 1184.64 328.98 1185.66 328.66 C1186.68 328.34 1187.70 321.57 1188.71 320.92 C1189.73 320.28 1190.75 323.18 1191.77 324.79 C1192.79 326.40 1193.81 330.20 1194.83 330.59 C1195.84 330.98 1196.86 327.22 1197.88 327.11 C1198.90 327.00 1199.92 330.12 1200.93 329.95 C1201.95 329.77 1203.15 327.15 1203.99 326.08 C1204.83 325.01 1205.66 323.93 1206.00 323.50" fill="none" stroke="#0c0c0c" stroke-width="1.9" stroke-linejoin="round" stroke-linecap="round"/></svg>
<div class="b " style="left:819.70px;top:432.30px;width:440.60px;height:253.50px;background:#fafafa;box-shadow:0 1px 1.5px rgba(0,0,0,.22);"></div>
<div class="b " style="left:833.50px;top:465.00px;width:413.50px;height:210.70px;background:#efefef;"></div>
<div class="b " style="left:833.50px;top:438.40px;width:63.30px;height:26.80px;background:#ffffff;border:1px solid #d6d6d6;border-bottom:none;"></div>
<div class="b " style="left:896.60px;top:438.40px;width:86.60px;height:26.80px;background:#5590e6;"></div>
<div class="b " style="left:833.50px;top:464.50px;width:413.50px;height:1.20px;background:#4d8ad6;"></div>
<svg class="b" style="left:0;top:0" width="1280" height="720" viewBox="0 0 1280 720"><defs><linearGradient id="cb" x1="0" y1="0" x2="0" y2="1"><stop offset="0" stop-color="#e80000"/><stop offset=".04" stop-color="#f01800"/><stop offset=".12" stop-color="#ff8a00"/><stop offset=".22" stop-color="#fff000"/><stop offset=".30" stop-color="#d8f800"/><stop offset=".42" stop-color="#30f000"/><stop offset=".55" stop-color="#00f020"/><stop offset=".68" stop-color="#00f8a0"/><stop offset=".78" stop-color="#00f8f8"/><stop offset=".86" stop-color="#0090f8"/><stop offset=".94" stop-color="#0010f0"/><stop offset="1" stop-color="#0000e0"/></linearGradient></defs><rect x="891.80" y="476.20" width="314.20" height="176.60" fill="#0000ee"/><rect x="891.80" y="532.8" width="314.20" height="3.1" fill="#2a78f0" opacity=".4"/><rect x="891.80" y="533.5" width="314.20" height="1.7" fill="#4accf4"/><rect x="909.5" y="570.3" width="8.5" height="1.5" rx=".7" fill="#58a8ff" opacity="0.35"/><rect x="976.5" y="570.3" width="9.5" height="1.5" rx=".7" fill="#58a8ff" opacity="0.60"/><rect x="995.9" y="570.3" width="11.6" height="1.5" rx=".7" fill="#58a8ff" opacity="0.60"/><rect x="1020.3" y="570.3" width="19.4" height="1.5" rx=".7" fill="#58a8ff" opacity="0.75"/><rect x="1048.7" y="570.3" width="12.9" height="1.5" rx=".7" fill="#58a8ff" opacity="0.65"/><rect x="1073.2" y="570.3" width="26.3" height="1.5" rx=".7" fill="#58a8ff" opacity="0.60"/><rect x="1117.0" y="570.3" width="14.2" height="1.5" rx=".7" fill="#58a8ff" opacity="0.55"/><rect x="1146.7" y="570.3" width="11.1" height="1.5" rx=".7" fill="#58a8ff" opacity="0.35"/><rect x="1166.0" y="570.3" width="31.0" height="1.5" rx=".7" fill="#58a8ff" opacity="0.80"/><rect x="1202.0" y="570.3" width="4.0" height="1.5" rx=".7" fill="#58a8ff" opacity="0.50"/><rect x="1217.8" y="522.2" width="16.6" height="117.2" fill="url(#cb)"/></svg>
<svg class="b tx" style="left:0;top:0" width="1280" height="720" viewBox="0 0 1280 720">
<text x="29.44" y="36.40" font-size="12.40" fill="#a2a2a6" letter-spacing="-1.040" stroke="#a2a2a6" stroke-width="0.22">SPG-V500</text>
<text x="98.75" y="35.60" font-size="11.90" fill="#ffffff" letter-spacing="-1.044" stroke="#ffffff" stroke-width="0.45">File</text>
<text x="126.46" y="35.60" font-size="11.90" fill="#ffffff" letter-spacing="-0.927" stroke="#ffffff" stroke-width="0.45">Setting</text>
<text x="169.55" y="35.60" font-size="11.90" fill="#ffffff" letter-spacing="-0.909" stroke="#ffffff" stroke-width="0.45">Help</text>
<text x="38.72" y="84.00" font-size="27.20" fill="#d6fbff" letter-spacing="-0.302" stroke="#d6fbff" stroke-width="0.22">Running</text>
<text x="260.02" y="78.40" font-size="12.30" fill="#ffffff" letter-spacing="-0.462" stroke="#ffffff" stroke-width="0.22">Measure</text>
<text x="390.00" y="78.40" font-size="12.30" fill="#ffffff" letter-spacing="-0.762" stroke="#ffffff" stroke-width="0.22">Viewer</text>
<text x="522.43" y="92.90" font-size="11.40" fill="#8e8e93" letter-spacing="-0.973" stroke="#8e8e93" stroke-width="0.22">Connect</text>
<text x="589.89" y="92.90" font-size="11.40" fill="#8e8e93" letter-spacing="-0.465" stroke="#8e8e93" stroke-width="0.22">Method</text>
<text x="657.29" y="92.90" font-size="11.40" fill="#8e8e93" letter-spacing="-0.626" stroke="#8e8e93" stroke-width="0.22">Setting</text>
<text x="728.49" y="92.90" font-size="11.40" fill="#8e8e93" letter-spacing="-1.674" stroke="#8e8e93" stroke-width="0.22">Save</text>
<text x="1048.00" y="78.80" font-size="12.30" fill="#97979c" letter-spacing="-0.543" stroke="#97979c" stroke-width="0.22">Autosave</text>
<text x="1191.72" y="80.20" font-size="17.40" fill="#ffffff" letter-spacing="-0.426" stroke="#ffffff" stroke-width="0.22">Stop</text>
<text x="19.22" y="122.00" font-size="12.20" fill="#fff" letter-spacing="0.144" stroke="#fff" stroke-width="0.22">Method</text>
<text x="200.92" y="122.00" font-size="12.20" fill="#fff" letter-spacing="-0.235" stroke="#fff" stroke-width="0.22">Measurement Condition</text>
<text x="435.02" y="122.00" font-size="12.20" fill="#fff" letter-spacing="-0.103" stroke="#fff" stroke-width="0.22">Edit</text>
<text x="505.85" y="122.00" font-size="12.20" fill="#fff" letter-spacing="-0.676" stroke="#fff" stroke-width="0.22">Set</text>
<text x="526.80" y="122.00" font-size="12.20" fill="#fff" letter-spacing="-3.334" stroke="#fff" stroke-width="0.22">WL</text>
<text x="613.90" y="122.00" font-size="12.20" fill="#fff" letter-spacing="-0.113" stroke="#fff" stroke-width="0.22">Integration Time</text>
<text x="861.39" y="122.00" font-size="12.20" fill="#fff" letter-spacing="-0.467" stroke="#fff" stroke-width="0.22">Gain</text>
<text x="935.00" y="122.00" font-size="12.20" fill="#fff" letter-spacing="-0.619" stroke="#fff" stroke-width="0.22">Average</text>
<text x="1170.39" y="122.00" font-size="12.20" fill="#fff" letter-spacing="-0.325" stroke="#fff" stroke-width="0.22">2024/03/06 08:45</text>
<text x="25.06" y="146.00" font-size="11.80" fill="#4c4c50" letter-spacing="-0.070" stroke="#4c4c50" stroke-width="0.22">LD</text>
<text x="207.23" y="146.00" font-size="11.80" fill="#4c4c50" letter-spacing="-0.042" stroke="#4c4c50" stroke-width="0.22">880nm</text>
<text x="525.03" y="146.00" font-size="11.80" fill="#45454a" letter-spacing="-0.264" stroke="#45454a" stroke-width="0.22">881.8</text>
<text x="562.21" y="146.20" font-size="12.20" fill="#fff" stroke="#fff" stroke-width="0.22">nm</text>
<text x="641.41" y="146.00" font-size="11.80" fill="#45454a" stroke="#45454a" stroke-width="0.22">6</text>
<text x="662.23" y="146.00" font-size="11.80" fill="#4c4c50" letter-spacing="0.495" stroke="#4c4c50" stroke-width="0.22">µs</text>
<text x="867.82" y="146.00" font-size="11.80" fill="#4c4c50" stroke="#4c4c50" stroke-width="0.22">1</text>
<text x="940.32" y="146.00" font-size="11.80" fill="#4c4c50" stroke="#4c4c50" stroke-width="0.22">1</text>
<text x="1189.56" y="146.00" font-size="11.80" fill="#85858a" letter-spacing="-0.271" stroke="#85858a" stroke-width="0.22">Dark</text>
<text x="25.95" y="192.80" font-size="12.30" fill="#414143" letter-spacing="-0.494" stroke="#414143" stroke-width="0.22">Spectral Graph</text>
<text x="379.15" y="216.10" font-size="12.30" fill="#414143" letter-spacing="-0.445" stroke="#414143" stroke-width="0.22">Y-Axis :</text>
<text x="737.32" y="216.60" font-size="12.20" fill="#414143" letter-spacing="-0.716" stroke="#414143" stroke-width="0.22">Range</text>
<text x="79.60" y="546.42" font-size="9.80" fill="#5a5a5c" stroke="#5a5a5c" stroke-width="0.22">0</text>
<text x="58.47" y="487.24" font-size="9.80" fill="#5a5a5c" letter-spacing="-0.167" stroke="#5a5a5c" stroke-width="0.22">10000</text>
<text x="58.71" y="428.06" font-size="9.80" fill="#5a5a5c" letter-spacing="-0.228" stroke="#5a5a5c" stroke-width="0.22">20000</text>
<text x="58.86" y="368.88" font-size="9.80" fill="#5a5a5c" letter-spacing="-0.264" stroke="#5a5a5c" stroke-width="0.22">30000</text>
<text x="59.00" y="309.70" font-size="9.80" fill="#5a5a5c" letter-spacing="-0.301" stroke="#5a5a5c" stroke-width="0.22">40000</text>
<text x="58.81" y="250.52" font-size="9.80" fill="#5a5a5c" letter-spacing="-0.252" stroke="#5a5a5c" stroke-width="0.22">50000</text>
<text x="83.58" y="562.02" font-size="9.80" fill="#5a5a5c" letter-spacing="-0.261" stroke="#5a5a5c" stroke-width="0.22">880</text>
<text x="220.18" y="562.02" font-size="9.80" fill="#5a5a5c" letter-spacing="-0.212" stroke="#5a5a5c" stroke-width="0.22">881</text>
<text x="356.78" y="562.02" font-size="9.80" fill="#5a5a5c" letter-spacing="-0.212" stroke="#5a5a5c" stroke-width="0.22">882</text>
<text x="493.38" y="562.02" font-size="9.80" fill="#5a5a5c" letter-spacing="-0.236" stroke="#5a5a5c" stroke-width="0.22">883</text>
<text x="629.98" y="562.02" font-size="9.80" fill="#5a5a5c" letter-spacing="-0.310" stroke="#5a5a5c" stroke-width="0.22">884</text>
<text x="766.58" y="562.02" font-size="9.80" fill="#5a5a5c" letter-spacing="-0.237" stroke="#5a5a5c" stroke-width="0.22">885</text>
<text x="-33.49" y="4.09" font-size="11.90" fill="#555" transform="translate(47.20 397.60) rotate(-90)" letter-spacing="-0.028" stroke="#555" stroke-width="0.08">Count[count]</text>
<text x="390.00" y="578.90" font-size="12.00" fill="#555" letter-spacing="-0.243" stroke="#555" stroke-width="0.10">WaveLength[nm]</text>
<text x="32.52" y="612.00" font-size="12.20" fill="#414143" letter-spacing="-0.553" stroke="#414143" stroke-width="0.22">Display ON/OFF</text>
<text x="71.52" y="637.60" font-size="12.20" fill="#414143" letter-spacing="-0.644" stroke="#414143" stroke-width="0.22">Peak Mark</text>
<text x="71.89" y="667.70" font-size="12.20" fill="#414143" letter-spacing="-0.480" stroke="#414143" stroke-width="0.22">Gaussian Fitting Curve</text>
<text x="223.72" y="636.20" font-size="12.20" fill="#414143" letter-spacing="-0.403" stroke="#414143" stroke-width="0.22">Number of Peaks</text>
<text x="316.10" y="636.40" font-size="12.20" fill="#414143" stroke="#414143" stroke-width="0.22">:</text>
<text x="328.67" y="637.40" font-size="14.50" fill="#414143" stroke="#414143" stroke-width="0.22">2</text>
<text x="255.09" y="669.80" font-size="12.20" fill="#414143" letter-spacing="-0.592" stroke="#414143" stroke-width="0.22">Center WL</text>
<text x="316.10" y="670.00" font-size="12.20" fill="#414143" stroke="#414143" stroke-width="0.22">:</text>
<text x="328.82" y="670.90" font-size="14.50" fill="#414143" letter-spacing="-0.160" stroke="#414143" stroke-width="0.22">881.6924</text>
<text x="440.32" y="669.80" font-size="12.20" fill="#414143" letter-spacing="-0.563" stroke="#414143" stroke-width="0.22">FWHM</text>
<text x="479.80" y="670.00" font-size="12.20" fill="#414143" stroke="#414143" stroke-width="0.22">:</text>
<text x="492.49" y="670.90" font-size="14.50" fill="#414143" letter-spacing="-0.056" stroke="#414143" stroke-width="0.22">0.5466</text>
<text x="697.12" y="612.20" font-size="12.20" fill="#414143" letter-spacing="-0.627" stroke="#414143" stroke-width="0.22">Reference Data</text>
<text x="733.60" y="637.90" font-size="12.20" fill="#414143" letter-spacing="-0.292" stroke="#414143" stroke-width="0.22">Add</text>
<text x="730.89" y="667.70" font-size="12.20" fill="#b2b2b2" letter-spacing="-0.716" stroke="#b2b2b2" stroke-width="0.22">Clear</text>
<text x="826.95" y="192.80" font-size="12.30" fill="#414143" letter-spacing="-0.697" stroke="#414143" stroke-width="0.22">Trend Graph</text>
<text x="839.16" y="217.00" font-size="12.20" fill="#414143" letter-spacing="-0.424" stroke="#414143" stroke-width="0.22">Total Counts</text>
<text x="1173.76" y="216.70" font-size="12.20" fill="#414143" letter-spacing="-0.574" stroke="#414143" stroke-width="0.22">Y-Axis Range</text>
<text x="892.70" y="370.82" font-size="9.80" fill="#6a6a6c" stroke="#6a6a6c" stroke-width="0.22">0</text>
<text x="871.91" y="355.65" font-size="9.80" fill="#6a6a6c" letter-spacing="-0.252" stroke="#6a6a6c" stroke-width="0.22">50000</text>
<text x="866.34" y="340.48" font-size="9.80" fill="#6a6a6c" letter-spacing="-0.177" stroke="#6a6a6c" stroke-width="0.22">100000</text>
<text x="866.34" y="325.31" font-size="9.80" fill="#6a6a6c" letter-spacing="-0.177" stroke="#6a6a6c" stroke-width="0.22">150000</text>
<text x="866.59" y="310.14" font-size="9.80" fill="#6a6a6c" letter-spacing="-0.226" stroke="#6a6a6c" stroke-width="0.22">200000</text>
<text x="866.59" y="294.96" font-size="9.80" fill="#6a6a6c" letter-spacing="-0.226" stroke="#6a6a6c" stroke-width="0.22">250000</text>
<text x="866.74" y="279.79" font-size="9.80" fill="#6a6a6c" letter-spacing="-0.255" stroke="#6a6a6c" stroke-width="0.22">300000</text>
<text x="866.74" y="264.62" font-size="9.80" fill="#6a6a6c" letter-spacing="-0.255" stroke="#6a6a6c" stroke-width="0.22">350000</text>
<text x="918.36" y="380.02" font-size="9.80" fill="#6a6a6c" letter-spacing="-0.376" stroke="#6a6a6c" stroke-width="0.22">1620</text>
<text x="979.26" y="380.02" font-size="9.80" fill="#6a6a6c" letter-spacing="-0.376" stroke="#6a6a6c" stroke-width="0.22">1640</text>
<text x="1040.17" y="380.02" font-size="9.80" fill="#6a6a6c" letter-spacing="-0.376" stroke="#6a6a6c" stroke-width="0.22">1660</text>
<text x="1101.07" y="380.02" font-size="9.80" fill="#6a6a6c" letter-spacing="-0.376" stroke="#6a6a6c" stroke-width="0.22">1680</text>
<text x="1161.97" y="380.02" font-size="9.80" fill="#6a6a6c" letter-spacing="-0.376" stroke="#6a6a6c" stroke-width="0.22">1700</text>
<text x="-33.60" y="4.13" font-size="12.00" fill="#6c6c6c" transform="translate(848.00 310.00) rotate(-90)" letter-spacing="-0.060" stroke="#6c6c6c" stroke-width="0.08">Count[count]</text>
<text x="970.03" y="397.61" font-size="12.10" fill="#686868" letter-spacing="-0.220" stroke="#686868" stroke-width="0.22">Number of Measurements [times]</text>
<text x="842.27" y="457.10" font-size="12.20" fill="#414143" letter-spacing="-0.708" stroke="#414143" stroke-width="0.22">Peak List</text>
<text x="904.65" y="457.10" font-size="12.20" fill="#ffffff" letter-spacing="-0.120" stroke="#ffffff" stroke-width="0.22">Intensity Map</text>
<text x="863.58" y="491.40" font-size="10.40" fill="#333" letter-spacing="-0.505">880.0</text>
<text x="863.58" y="647.20" font-size="10.40" fill="#333" letter-spacing="-0.505">885.0</text>
<text x="-36.50" y="3.65" font-size="10.60" fill="#222" transform="translate(843.30 564.50) rotate(-90)" letter-spacing="-0.463">WaveLength[nm]</text>
<text x="974.34" y="668.50" font-size="10.80" fill="#222" letter-spacing="-0.423">Number of Measurements [times]</text>
<text x="1213.82" y="519.23" font-size="10.40" fill="#222" letter-spacing="-0.693">100%</text>
<text x="1221.84" y="650.53" font-size="10.40" fill="#222" letter-spacing="-1.200">0%</text>
</svg>
</body></html>
